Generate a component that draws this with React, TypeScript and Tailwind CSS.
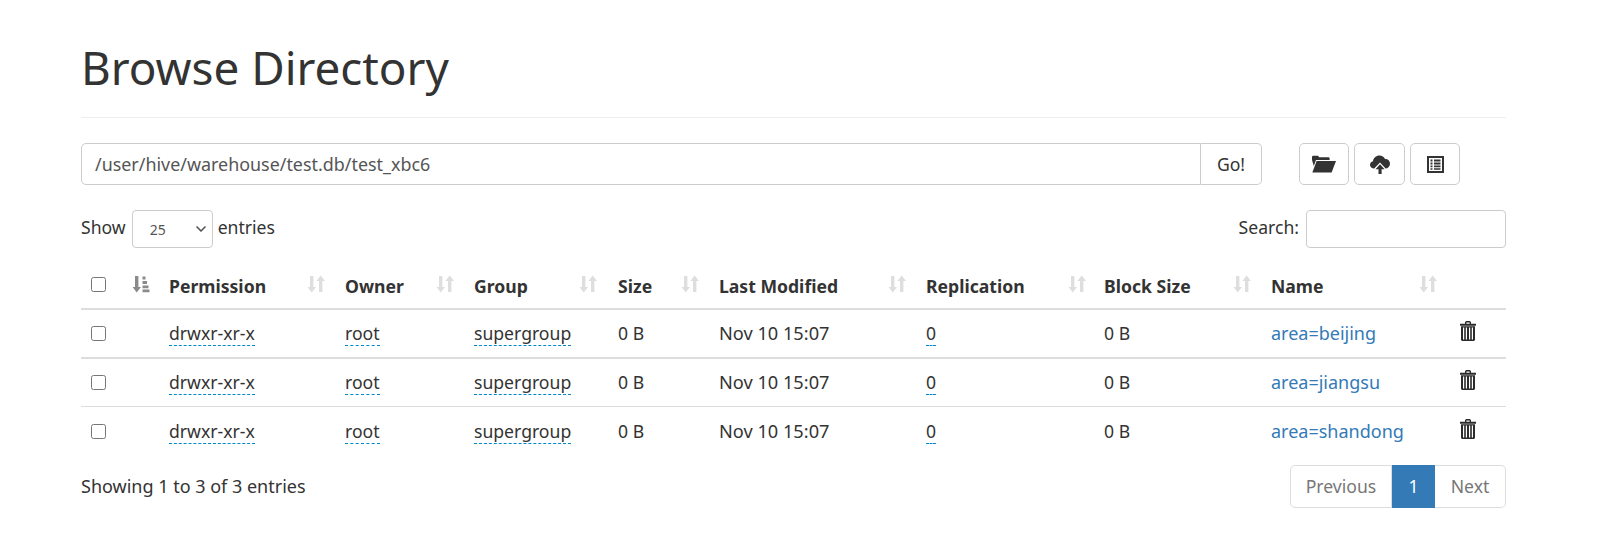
import { ChevronDown } from "lucide-react";

const COLUMNS = [
  { label: "Permission", width: "w-[176px]", labelWidth: "w-[138px]" },
  { label: "Owner", width: "w-[129px]", labelWidth: "w-[91px]" },
  { label: "Group", width: "w-[144px]", labelWidth: "w-[105px]" },
  { label: "Size", width: "w-[101px]", labelWidth: "w-[63px]" },
  { label: "Last Modified", width: "w-[207px]", labelWidth: "w-[169px]" },
  { label: "Replication", width: "w-[178px]", labelWidth: "w-[142px]" },
  { label: "Block Size", width: "w-[167px]", labelWidth: "w-[129px]" },
  { label: "Name", width: "w-[180px]", labelWidth: "w-[148px]" },
];

const ROWS = [
  { name: "area=beijing", border: "border-b-2" },
  { name: "area=jiangsu", border: "border-b" },
  { name: "area=shandong", border: "" },
];

function SortIcon() {
  return (
    <svg viewBox="0 0 18 18" className="mb-[4px] h-[18px] w-[18px] fill-[#dedede]">
      <path d="M3 1h3.4v11H9l-4.3 5.4L.6 12H3z" />
      <path d="M12 17V6H9.4l4.3-5.4L18 6h-2.6v11z" />
    </svg>
  );
}

function SortedIcon() {
  return (
    <svg viewBox="0 0 18 18" className="mb-[4px] h-[18px] w-[18px] fill-[#8a8a8a]">
      <path d="M3 1h3.4v11H9l-4.3 5.4L.6 12H3z" />
      <path d="M10.5 1.5h3v3h-3zM10.5 6h4.5v3h-4.5zM10.5 10.5h6v2.8h-6zM10.5 14.5h7v2.8h-7z" />
    </svg>
  );
}

function FolderIcon() {
  return (
    <svg viewBox="0 0 24 18" className="h-[18px] w-6 fill-[#333]">
      <path d="M0 5V1.6L1 .8h5l1.2 1.5h9.6l.8.8V5H4L1.8 11z" />
      <path d="M4.6 6H24l-4.4 11.5H.3z" />
    </svg>
  );
}

function UploadIcon() {
  return (
    <svg viewBox="0 0 20 20" className="h-5 w-5 fill-[#333]">
      <path d="M4.2 14.4H3.4C1.5 14.2 0 12.8 0 10.8c0-1.8 1.3-3.2 3-3.5C3.4 4 6 1.5 9.4 1.5c2.6 0 4.7 1.4 5.6 3.6 2.8-.2 5 1.8 5 4.6 0 2.4-1.7 4.3-4 4.7h-.4L10 8.4z" />
      <path d="M10 10.2l4.6 5h-3V20H8.5v-4.8h-3z" />
    </svg>
  );
}

function ListIcon() {
  return (
    <svg viewBox="0 0 17 17" className="h-[17px] w-[17px] fill-[#333]" fillRule="evenodd">
      <path d="M0 0h17v17H0zM2 2v13h13V2z" />
      <path d="M3.5 3.5h2v2h-2zM7 3.5h6.5v2H7zM3.5 6.5h2v2h-2zM7 6.5h6.5v2H7zM3.5 9.5h2v1.8h-2zM7 9.5h6.5v1.8H7zM3.5 12.2h2v1.6h-2zM7 12.2h6.5v1.6H7z" />
    </svg>
  );
}

function TrashIcon() {
  return (
    <svg viewBox="0 0 16 20" className="mb-[4px] h-5 w-4 fill-[#2b2b2b]" fillRule="evenodd">
      <path d="M5 2.8V1.2L6 0h4l1 1.2v1.6h5v2H0v-2zM6.4 2.8h3.2V1.4H6.4z" />
      <path d="M1 5.2h14V19l-1 1H2l-1-1zM3 6.5v11.9h1.2V6.5zM5.8 6.5v11.9H7V6.5zM9 6.5v11.9h1.2V6.5zM11.8 6.5v11.9H13V6.5z" />
    </svg>
  );
}

function Editable({ children }: { children: string }) {
  return <span className="border-b border-dashed border-[#0088cc]">{children}</span>;
}

export default function App() {
  return (
    <div className="h-[546px] overflow-hidden bg-white font-['Noto_Sans','Open_Sans',sans-serif] text-[17.6px] text-[#333]">
      <div className="ml-[62px] h-[542px] w-[1461px] border-b border-[#eee] pr-[17px] pl-[19px]">
        <div className="mt-[33px] h-[85px] border-b border-[#eee]">
          <h1 className="text-[45.8px] leading-[68px] font-normal text-[#333]">Browse Directory</h1>
        </div>

        <div className="mt-[25px] flex">
          <div className="flex w-[1181px]">
            <div className="flex h-[42px] flex-1 items-center rounded-l-[5px] border border-[#ccc] px-[13px] text-[17.9px] text-[#555]">
              /user/hive/warehouse/test.db/test_xbc6
            </div>
            <button className="h-[42px] w-[61px] rounded-r-[5px] border border-l-0 border-[#ccc] text-[#333]">
              Go!
            </button>
          </div>
          <div className="ml-[37px] flex gap-[5px]">
            <button className="flex h-[42px] w-[50px] items-center justify-center rounded-[5px] border border-[#ccc]">
              <FolderIcon />
            </button>
            <button className="flex h-[42px] w-[51px] items-center justify-center rounded-[5px] border border-[#ccc]">
              <UploadIcon />
            </button>
            <button className="flex h-[42px] w-[50px] items-center justify-center rounded-[5px] border border-[#ccc]">
              <ListIcon />
            </button>
          </div>
        </div>

        <div className="mt-[25px] flex h-[38px] items-center justify-between">
          <div className="flex items-center">
            <span className="mb-[3px]">Show</span>
            <div className="relative mr-[5px] ml-[6px]">
              <select className="block h-[38px] w-[81px] appearance-none rounded-[4px] border border-[#ccc] bg-white pl-[17px] text-[14px] text-[#555]">
                <option>25</option>
              </select>
              <ChevronDown className="pointer-events-none absolute top-[11px] right-[4px] h-4 w-4 text-[#555]" strokeWidth={2.5} />
            </div>
            <span className="mb-[3px]">entries</span>
          </div>
          <div className="flex items-center">
            <span className="mb-[3px]">Search:</span>
            <input className="ml-[7px] h-[38px] w-[200px] rounded-[4px] border border-[#ccc] bg-white" />
          </div>
        </div>

        <div className="mt-[14px]">
          <div className="flex h-[48px] items-center border-b-2 border-[#ddd] pt-[2px] font-bold">
            <div className="w-[51px] pl-[10px]">
              <input type="checkbox" className="mb-[4px] block h-[15px] w-[15px]" />
            </div>
            <div className="w-[37px]">
              <SortedIcon />
            </div>
            {COLUMNS.map(col => (
              <div key={col.label} className={`flex items-center ${col.width}`}>
                <span className={col.labelWidth}>{col.label}</span>
                <SortIcon />
              </div>
            ))}
          </div>
          {ROWS.map(row => (
            <div key={row.name} className={`flex h-[48.5px] items-center border-[#ddd] ${row.border}`}>
              <div className="w-[88px] pl-[10px]">
                <input type="checkbox" className="block h-[15px] w-[15px]" />
              </div>
              <div className="w-[176px]">
                <Editable>drwxr-xr-x</Editable>
              </div>
              <div className="w-[129px]">
                <Editable>root</Editable>
              </div>
              <div className="w-[144px]">
                <Editable>supergroup</Editable>
              </div>
              <div className="w-[101px]">0 B</div>
              <div className="w-[207px] text-[18.2px]">Nov 10 15:07</div>
              <div className="w-[178px]">
                <Editable>0</Editable>
              </div>
              <div className="w-[167px]">0 B</div>
              <div className="w-[189px] text-[18px] text-[#337ab7]">{row.name}</div>
              <TrashIcon />
            </div>
          ))}
        </div>

        <div className="mt-[9px] flex items-center justify-between">
          <span className="text-[18px]">Showing 1 to 3 of 3 entries</span>
          <div className="flex h-[43px] text-[#777]">
            <div className="flex w-[102px] items-center justify-center rounded-l-[5px] border border-[#ddd]">Previous</div>
            <div className="flex w-[43px] items-center justify-center bg-[#337ab7] text-white">1</div>
            <div className="flex w-[71px] items-center justify-center rounded-r-[5px] border border-l-0 border-[#ddd]">Next</div>
          </div>
        </div>
      </div>
    </div>
  );
}
